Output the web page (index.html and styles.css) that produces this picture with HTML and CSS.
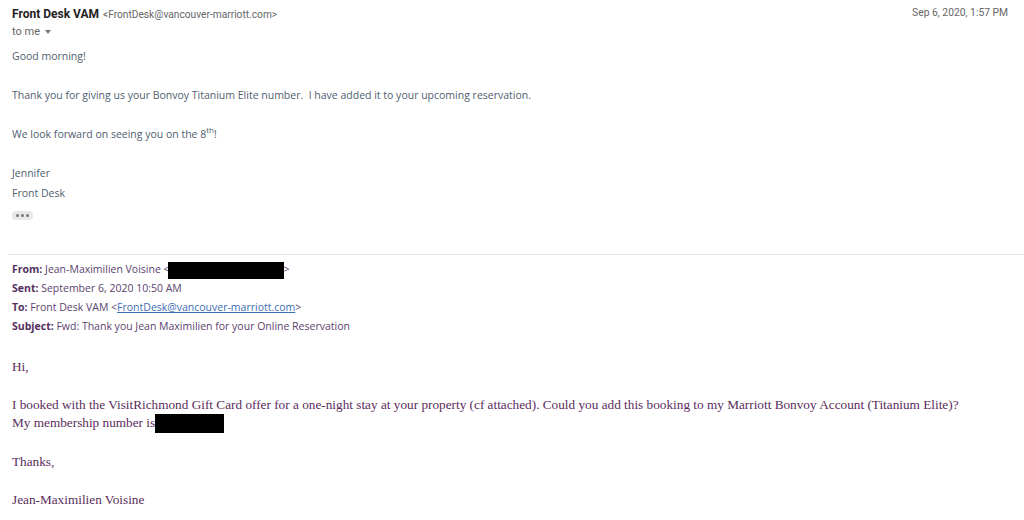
FILE: index.html
```html
<!DOCTYPE html>
<html>
<head>
<meta charset="utf-8">
<link rel="stylesheet" href="styles.css">
</head>
<body>
<div class="mail">
  <div class="head">
    <div class="sender">
      <div class="from-line"><span class="name">Front Desk VAM</span> <span class="addr">&lt;FrontDesk@vancouver-marriott.com&gt;</span></div>
      <div class="tome">to me <span class="caret"></span></div>
    </div>
    <div class="date">Sep 6, 2020, 1:57 PM</div>
  </div>
  <div class="reply">
    <p>Good morning!</p>
    <p>Thank you for giving us your Bonvoy Titanium Elite number.&nbsp; I have added it to your upcoming reservation.</p>
    <p>We look forward on seeing you on the 8<sup>th</sup>!</p>
    <p class="sig">Jennifer<br>Front Desk</p>
    <div class="dots"><span></span><span></span><span></span></div>
  </div>
  <div class="fwd">
    <div class="row"><b>From:</b> Jean-Maximilien Voisine &lt;<span class="redact r1"></span>&gt;</div>
    <div class="row"><b>Sent:</b> September 6, 2020 10:50 AM</div>
    <div class="row"><b>To:</b> Front Desk VAM &lt;<a class="link">FrontDesk@vancouver-marriott.com</a>&gt;</div>
    <div class="row"><b>Subject:</b> Fwd: Thank you Jean Maximilien for your Online Reservation</div>
  </div>
  <div class="orig">
    <p>Hi,</p>
    <p>I booked with the VisitRichmond Gift Card offer for a one-night stay at your property (cf attached). Could you add this booking to my Marriott Bonvoy Account (Titanium Elite)?<br>My membership number is<span class="redact r2"></span></p>
    <p>Thanks,</p>
    <p>Jean-Maximilien Voisine</p>
  </div>
</div>
</body>
</html>
```
FILE: styles.css
```css
html, body { margin: 0; padding: 0; background: #fff; }
body { width: 1024px; height: 520px; overflow: hidden; }
.mail { padding: 4px 16px 0 12px; }
.head { display: flex; justify-content: space-between; align-items: flex-start; }
.from-line { font-family: Roboto, Arial, sans-serif; line-height: 17px; }
.name { font-weight: bold; font-size: 12px; color: #222; }
.addr { font-size: 10.2px; color: #666; }
.tome { font-family: Roboto, Arial, sans-serif; font-size: 11px; color: #666; line-height: 17px; display: flex; align-items: center; gap: 5px; }
.caret { width: 0; height: 0; border-left: 3.5px solid transparent; border-right: 3.5px solid transparent; border-top: 4px solid #777; }
.date { font-family: Roboto, Arial, sans-serif; font-size: 10.3px; color: #666; line-height: 17px; }
.reply { font-family: "Open Sans", sans-serif; font-size: 10.5px; color: #50606f; line-height: 19.5px; margin-top: 7px; }
.reply p { margin: 0 0 19.5px 0; }
.reply p.sig { margin-bottom: 8px; }
.reply sup { font-size: 8px; line-height: 0; vertical-align: 5px; }
.dots { display: flex; width: fit-content; gap: 2px; background: #e8e8e8; border-radius: 4px; padding: 3px 4px; }
.dots span { width: 3px; height: 3px; background: #777; border-radius: 50%; }
.fwd { border-top: 1px solid #e2e2e2; margin: 34px -16px 0 -4px; padding: 5px 16px 0 4px; font-family: "Open Sans", sans-serif; font-size: 10.5px; color: #5b3f6e; line-height: 19px; }
.fwd b { font-weight: bold; color: #53305f; }
.link { color: #3b6fb6; text-decoration: underline; }
.redact { display: inline-block; background: #000; vertical-align: middle; }
.r1 { width: 116px; height: 17px; margin-left: -2px; }
.r2 { width: 69px; height: 19px; margin-left: 0; }
.orig { font-family: "Liberation Serif", "Times New Roman", serif; font-size: 13.25px; color: #5a2d5c; line-height: 18px; margin-top: 22px; }
.orig p { margin: 0 0 20px 0; }
```
